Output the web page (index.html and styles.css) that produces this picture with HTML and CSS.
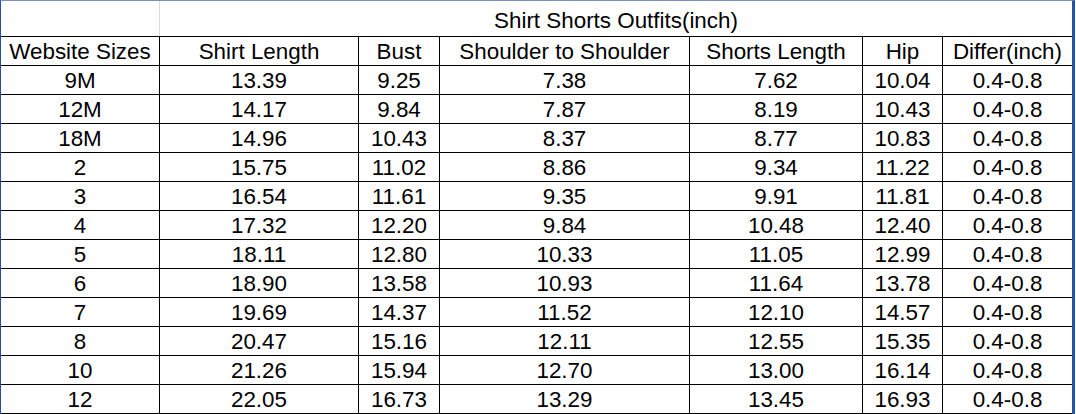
FILE: index.html
```html
<!DOCTYPE html>
<html>
<head>
<meta charset="utf-8">
<link rel="stylesheet" href="styles.css">
</head>
<body>
<div class="sheet">
  <div class="title-row">
    <div class="blank"></div>
    <div class="title">Shirt Shorts Outfits(inch)</div>
  </div>
  <div class="grid">
    <div class="cell">Website Sizes</div><div class="cell">Shirt Length</div><div class="cell">Bust</div><div class="cell">Shoulder to Shoulder</div><div class="cell">Shorts Length</div><div class="cell">Hip</div><div class="cell">Differ(inch)</div>
    <div class="cell">9M</div><div class="cell">13.39</div><div class="cell">9.25</div><div class="cell">7.38</div><div class="cell">7.62</div><div class="cell">10.04</div><div class="cell">0.4-0.8</div>
    <div class="cell">12M</div><div class="cell">14.17</div><div class="cell">9.84</div><div class="cell">7.87</div><div class="cell">8.19</div><div class="cell">10.43</div><div class="cell">0.4-0.8</div>
    <div class="cell">18M</div><div class="cell">14.96</div><div class="cell">10.43</div><div class="cell">8.37</div><div class="cell">8.77</div><div class="cell">10.83</div><div class="cell">0.4-0.8</div>
    <div class="cell">2</div><div class="cell">15.75</div><div class="cell">11.02</div><div class="cell">8.86</div><div class="cell">9.34</div><div class="cell">11.22</div><div class="cell">0.4-0.8</div>
    <div class="cell">3</div><div class="cell">16.54</div><div class="cell">11.61</div><div class="cell">9.35</div><div class="cell">9.91</div><div class="cell">11.81</div><div class="cell">0.4-0.8</div>
    <div class="cell">4</div><div class="cell">17.32</div><div class="cell">12.20</div><div class="cell">9.84</div><div class="cell">10.48</div><div class="cell">12.40</div><div class="cell">0.4-0.8</div>
    <div class="cell">5</div><div class="cell">18.11</div><div class="cell">12.80</div><div class="cell">10.33</div><div class="cell">11.05</div><div class="cell">12.99</div><div class="cell">0.4-0.8</div>
    <div class="cell">6</div><div class="cell">18.90</div><div class="cell">13.58</div><div class="cell">10.93</div><div class="cell">11.64</div><div class="cell">13.78</div><div class="cell">0.4-0.8</div>
    <div class="cell">7</div><div class="cell">19.69</div><div class="cell">14.37</div><div class="cell">11.52</div><div class="cell">12.10</div><div class="cell">14.57</div><div class="cell">0.4-0.8</div>
    <div class="cell">8</div><div class="cell">20.47</div><div class="cell">15.16</div><div class="cell">12.11</div><div class="cell">12.55</div><div class="cell">15.35</div><div class="cell">0.4-0.8</div>
    <div class="cell">10</div><div class="cell">21.26</div><div class="cell">15.94</div><div class="cell">12.70</div><div class="cell">13.00</div><div class="cell">16.14</div><div class="cell">0.4-0.8</div>
    <div class="cell">12</div><div class="cell">22.05</div><div class="cell">16.73</div><div class="cell">13.29</div><div class="cell">13.45</div><div class="cell">16.93</div><div class="cell">0.4-0.8</div>
  </div>
</div>
</body>
</html>
```
FILE: styles.css
```css
html, body {
  margin: 0;
  padding: 0;
  background: #ffffff;
}
body {
  width: 1076px;
  height: 414px;
  overflow: hidden;
  font-family: "Liberation Sans", Arial, sans-serif;
  font-size: 22.4px;
  color: #000;
}
.sheet {
  width: 1071px;
  border-left: 1px solid #1f4fa6;
  border-top: 1px solid #7890bb;
  border-right: 3px solid #2454a6;
}
.title-row {
  display: flex;
  height: 35px;
  border-bottom: 1px solid #000;
}
.title-row .blank {
  width: 158px;
  border-right: 1px solid #dadada;
}
.title-row .title {
  flex: 1;
  text-align: center;
  box-sizing: border-box;
  padding-top: 5px;
  line-height: 30px;
  white-space: nowrap;
}
.grid {
  display: grid;
  grid-template-columns: 158px 198px 80px 249px 172px 79px 129px;
  grid-auto-rows: 28px;
  gap: 1px;
  background: #000;
  border-bottom: 1px solid #000;
}
.cell {
  background: #fff;
  text-align: center;
  box-sizing: border-box;
  padding-top: 1px;
  line-height: 27px;
  white-space: nowrap;
  overflow: hidden;
}
```
